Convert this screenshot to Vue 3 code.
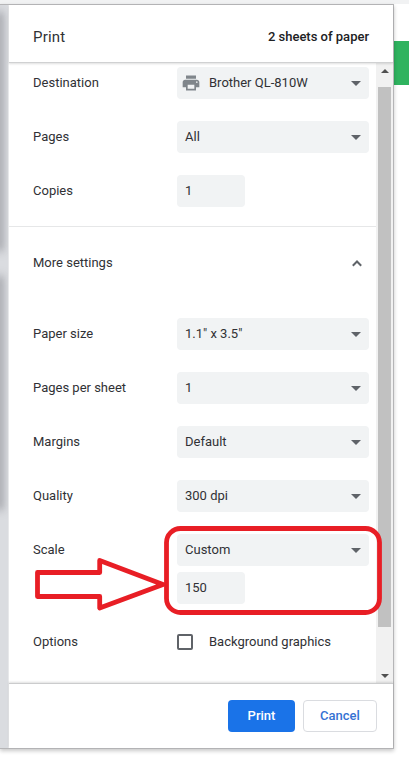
<script setup>
const basics = [
  { label: 'Destination', value: 'Brother QL-810W', type: 'select', printer: true },
  { label: 'Pages', value: 'All', type: 'select' },
  { label: 'Copies', value: '1', type: 'input' },
]
const advanced = [
  { label: 'Paper size', value: '1.1" x 3.5"' },
  { label: 'Pages per sheet', value: '1' },
  { label: 'Margins', value: 'Default' },
  { label: 'Quality', value: '300 dpi' },
  { label: 'Scale', value: 'Custom' },
]
</script>

<template>
  <div class="page">
    <div class="page-top"></div>
    <div class="body">
      <div class="dialog">
        <div class="preview">
          <div class="sheet first"></div>
          <div class="sheet second"></div>
        </div>
        <div class="panel">
          <header class="header">
            <h1>Print</h1>
            <span class="summary">2 sheets of paper</span>
          </header>
          <div class="scroller">
            <main class="settings">
              <section class="group basic">
                <div v-for="row in basics" :key="row.label" class="row">
                  <span class="label">{{ row.label }}</span>
                  <div class="field" :class="row.type">
                    <svg v-if="row.printer" class="printer" viewBox="0 0 24 24">
                      <path d="M19 8H5c-1.66 0-3 1.34-3 3v6h4v4h12v-4h4v-6c0-1.66-1.34-3-3-3zm-3 11H8v-5h8v5zm3-7c-.55 0-1-.45-1-1s.45-1 1-1 1 .45 1 1-.45 1-1 1zm-1-9H6v4h12V3z" />
                    </svg>
                    <span class="value">{{ row.value }}</span>
                    <svg v-if="row.type === 'select'" class="caret" viewBox="0 0 10 5"><path d="M0 0h10L5 5z" /></svg>
                  </div>
                </div>
              </section>
              <div class="more">
                <span>More settings</span>
                <svg class="chevron" viewBox="0 0 10 7"><path d="M.8 5.7L5 1.5l4.2 4.2" /></svg>
              </div>
              <section class="group">
                <div v-for="row in advanced" :key="row.label" class="row">
                  <span class="label">{{ row.label }}</span>
                  <div class="field select">
                    <span class="value">{{ row.value }}</span>
                    <svg class="caret" viewBox="0 0 10 5"><path d="M0 0h10L5 5z" /></svg>
                  </div>
                </div>
              </section>
              <div class="row scale-value">
                <span class="label"></span>
                <div class="field input"><span class="value">150</span></div>
              </div>
              <div class="row options">
                <span class="label">Options</span>
                <span class="checkbox"></span>
                <span>Background graphics</span>
              </div>
            </main>
            <div class="scrollbar">
              <svg class="arrow" viewBox="0 0 8 4"><path d="M0 4h8L4 0z" /></svg>
              <div class="thumb"></div>
              <svg class="arrow down" viewBox="0 0 8 4"><path d="M0 0h8L4 4z" /></svg>
            </div>
          </div>
          <footer class="footer">
            <button class="primary">Print</button>
            <button class="secondary">Cancel</button>
          </footer>
        </div>
      </div>
      <div class="banner"></div>
    </div>
    <svg class="annotation" viewBox="0 0 409 772">
      <rect x="166.5" y="528.5" width="213" height="84" rx="14" />
      <path d="M37.5 572.5H99.7V560.5L163 584.5L99.7 608V596.5H37.5z" />
    </svg>
  </div>
</template>

<style>
body { margin: 0; background: #fff; }
</style>

<style scoped>
* { box-sizing: border-box; }
.page {
  position: relative;
  width: 409px;
  height: 772px;
  overflow: hidden;
  background: #fff;
  color: #303135;
  font: 13px/20px Roboto, sans-serif;
}
.page-top { height: 4px; background: #f1f2f3; }
.body { display: flex; align-items: flex-start; }
.dialog {
  display: flex;
  width: 394px;
  height: 745px;
  border: solid #b5b5b7;
  border-width: 1px 1px 1px 0;
  box-shadow: 0 2px 4px rgba(0, 0, 0, 0.22);
  z-index: 1;
  background: #fff;
}
.preview { width: 9px; flex: none; overflow: hidden; background: #dadce0; border-right: 1px solid #e7e8ea; padding-top: 9px; }
.sheet { width: 1px; margin-left: -1px; box-shadow: 0 0 9px 2px rgba(85, 85, 92, 0.65); }
.first { height: 235px; }
.second { height: 230px; margin-top: 29px; }
.panel { flex: 1; display: flex; flex-direction: column; min-width: 0; }
.header {
  height: 58px;
  flex: none;
  display: flex;
  align-items: center;
  justify-content: space-between;
  padding: 6px 24px 0;
  border-bottom: 1px solid #d0d1d2;
  box-shadow: 0 1px 2px rgba(0, 0, 0, 0.13);
  z-index: 1;
}
h1 { margin: 0; font-size: 15px; font-weight: 400; letter-spacing: 0.2px; }
.summary { font-weight: 500; color: #202124; }
.scroller { display: flex; height: 620px; }
.settings { flex: 1; min-width: 0; }
.group { display: flex; flex-direction: column; gap: 22px; }
.basic { padding: 4px 0 19px; border-bottom: 1px solid #e6e7e8; }
.row { display: flex; align-items: center; height: 32px; padding-left: 24px; }
.label { width: 144px; flex: none; }
.field { display: flex; align-items: center; height: 32px; padding: 0 8px; border-radius: 4px; background: #f1f3f4; flex: none; }
.select { width: 192px; }
.input { width: 68px; }
.printer { width: 20px; height: 20px; margin: 0 8px 0 -4px; fill: #80868b; }
.value { white-space: nowrap; }
.caret { width: 10px; height: 5px; margin-left: auto; fill: #5f6368; }
.more { display: flex; align-items: center; justify-content: space-between; height: 72px; padding: 0 14px 0 24px; margin-bottom: 19px; }
.chevron { width: 10px; height: 7px; fill: none; stroke: #5f6368; stroke-width: 2; }
.scale-value { margin-top: 6px; }
.options { margin-top: 22px; }
.checkbox { width: 16px; height: 16px; margin-right: 16px; border: 2px solid #5f6368; border-radius: 2px; }
.scrollbar { width: 17px; flex: none; display: flex; flex-direction: column; align-items: center; background: #f1f1f1; padding: 6px 2px 5px; }
.arrow { width: 8px; height: 4px; fill: #505050; flex: none; }
.thumb { width: 13px; height: 540px; margin-top: 14px; background: #c1c1c1; }
.down { margin-top: auto; }
.footer {
  flex: 1;
  display: flex;
  gap: 8px;
  justify-content: flex-end;
  align-items: center;
  padding-right: 16px;
  border-top: 1px solid #cbcccd;
  box-shadow: 0 -1px 2px rgba(0, 0, 0, 0.13);
  z-index: 1;
}
button { height: 32px; padding: 0; border-radius: 4px; font: 500 13px/20px Roboto, sans-serif; }
.primary { width: 67px; border: 0; color: #fff; background: #1a73e8; }
.secondary { width: 74px; border: 1px solid #dadce0; color: #3572d3; background: #fff; }
.banner { width: 16px; height: 44px; margin: 37px 0 0 -1px; background: #2fb35f; }
.annotation { position: absolute; left: 0; top: 0; width: 409px; height: 772px; z-index: 3; fill: none; stroke: #e81e25; stroke-width: 4.8; stroke-linejoin: round; }
</style>
